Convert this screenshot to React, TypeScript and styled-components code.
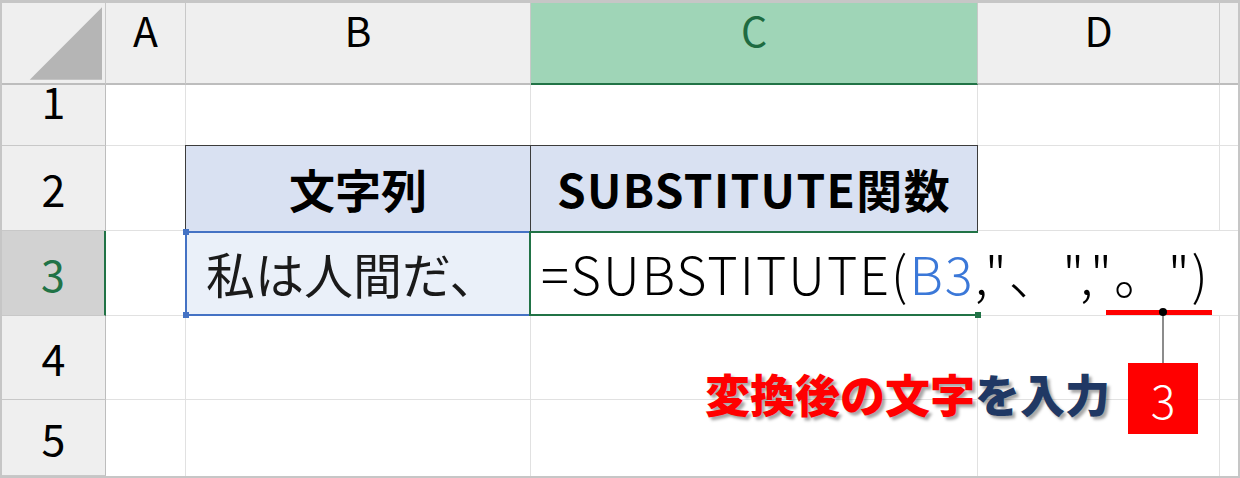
import React from "react";
import styled, { createGlobalStyle, css } from "styled-components";

const GlobalStyle = createGlobalStyle`
  html, body {
    margin: 0;
    padding: 0;
    background: #ffffff;
  }
  body {
    font-family: "Noto Sans CJK JP", "Noto Sans", sans-serif;
  }
`;

const GRID = "#e1e1e1";
const HEAD_LINE = "#c8c8c8";
const GREEN = "#217346";
const BLUE = "#4472c4";

function App() {
  return (
    <>
      <GlobalStyle />
      <Sheet>
        <Corner>
          <svg width="104" height="82" viewBox="0 0 104 82">
            <polygon points="28,78 101,78 101,5" fill="#b5b5b5" />
          </svg>
        </Corner>
        <ColHead>A</ColHead>
        <ColHead>B</ColHead>
        <ColHead $active>C</ColHead>
        <ColHead>D</ColHead>
        <ColHead $last />

        <RowHead $lift={30}>1</RowHead>
        <Cell />
        <Cell />
        <Cell />
        <Cell />
        <Cell $last />

        <RowHead>2</RowHead>
        <Cell />
        <TitleCell>文字列</TitleCell>
        <TitleCell $right>SUBSTITUTE関数</TitleCell>
        <Cell />
        <Cell $last />

        <RowHead $active>3</RowHead>
        <Cell />
        <SourceCell>私は人間だ、</SourceCell>
        <FormulaCell>
          =SUBSTITUTE(<Ref>B3</Ref>,"、","。")
        </FormulaCell>
        <Cell $spill />
        <Cell $last $spill />

        <RowHead>4</RowHead>
        <Cell />
        <Cell />
        <Cell />
        <Cell />
        <Cell $last />

        <RowHead>5</RowHead>
        <Cell $bottom />
        <Cell $bottom />
        <Cell $bottom />
        <Cell $bottom />
        <Cell $last $bottom />

        <Underline />
        <Pin />
        <Leader />
        <StepBadge>3</StepBadge>
        <Caption>
          <Hot>変換後の文字</Hot>を入力
        </Caption>
      </Sheet>
    </>
  );
}

export default App;

const Sheet = styled.div`
  position: relative;
  box-sizing: border-box;
  width: 1240px;
  height: 478px;
  border: 2px solid #c6c6c6;
  border-top-width: 3px;
  display: grid;
  grid-template-columns: 104px 80px 345px 447px 242px 18px;
  grid-template-rows: 82px 61px 85px 85px 84px 76px;
  background: #ffffff;
  overflow: hidden;
`;

const headBase = css`
  box-sizing: border-box;
  display: flex;
  align-items: center;
  justify-content: center;
  background: #efefef;
  font-size: 41px;
  color: #000000;
  line-height: 1;
`;

const Corner = styled.div`
  ${headBase};
  border-right: 1px solid ${HEAD_LINE};
  border-bottom: 2px solid #bdbdbd;
  svg {
    display: block;
  }
`;

const ColHead = styled.div<{ $active?: boolean; $last?: boolean }>`
  ${headBase};
  padding-bottom: 28px;
  border-right: ${(p) => (p.$last ? "none" : `1px solid ${HEAD_LINE}`)};
  border-bottom: 2px solid #bdbdbd;
  ${(p) =>
    p.$active &&
    css`
      background: #9fd5b7;
      color: #1e6b41;
      border-bottom: 2px solid ${GREEN};
    `}
`;

const RowHead = styled.div<{ $active?: boolean; $lift?: number }>`
  ${headBase};
  font-size: 43px;
  padding-bottom: ${(p) => p.$lift ?? 0}px;
  border-right: 1px solid #bdbdbd;
  border-bottom: 1px solid ${HEAD_LINE};
  ${(p) =>
    p.$active &&
    css`
      background: #d2d2d2;
      color: ${GREEN};
      border-right: 2px solid ${GREEN};
    `}
`;

const Cell = styled.div<{ $last?: boolean; $spill?: boolean; $bottom?: boolean }>`
  box-sizing: border-box;
  background: #ffffff;
  border-right: ${(p) => (p.$last || p.$spill ? "none" : `1px solid ${GRID}`)};
  border-bottom: ${(p) => (p.$bottom ? "none" : `1px solid ${GRID}`)};
  border-top: ${(p) => (p.$spill ? `1px solid ${GRID}` : "none")};
  margin-top: ${(p) => (p.$spill ? "-1px" : "0")};
`;

const TitleCell = styled.div<{ $right?: boolean }>`
  box-sizing: border-box;
  display: flex;
  align-items: center;
  justify-content: center;
  background: #d9e1f2;
  border-top: 1px solid #3c3c3c;
  border-left: ${(p) => (p.$right ? "none" : "1px solid #3c3c3c")};
  border-right: 1px solid #3c3c3c;
  margin-top: -1px;
  margin-left: ${(p) => (p.$right ? "0" : "-1px")};
  padding-bottom: 2px;
  font-size: 46px;
  font-weight: 700;
  letter-spacing: ${(p) => (p.$right ? "1.4px" : "0")};
  color: #000000;
  white-space: nowrap;
`;

const handle = css`
  content: "";
  position: absolute;
  width: 6px;
  height: 6px;
  background: ${BLUE};
`;

const SourceCell = styled.div`
  position: relative;
  box-sizing: border-box;
  display: flex;
  align-items: center;
  background: #eaf0f9;
  border: 2px solid ${BLUE};
  margin-left: -1px;
  padding-left: 19px;
  padding-bottom: 2px;
  font-size: 49px;
  font-weight: 400;
  color: #1a1a1a;
  white-space: nowrap;
  &::before {
    ${handle};
    left: -4px;
    top: -4px;
  }
  &::after {
    ${handle};
    left: -4px;
    bottom: -4px;
  }
`;

const FormulaCell = styled.div`
  position: relative;
  z-index: 2;
  box-sizing: border-box;
  display: flex;
  align-items: center;
  border-top: 2px solid ${GREEN};
  border-bottom: 2px solid ${GREEN};
  border-left: 2px solid ${GREEN};
  margin-left: -2px;
  padding-left: 10px;
  padding-bottom: 2px;
  font-size: 52px;
  font-weight: 300;
  letter-spacing: 2px;
  color: #000000;
  white-space: nowrap;
  overflow: visible;
  &::after {
    content: "";
    position: absolute;
    right: -3px;
    bottom: -4px;
    width: 6px;
    height: 6px;
    background: ${GREEN};
  }
`;

const Ref = styled.span`
  color: #3b78d8;
`;

const Underline = styled.div`
  position: absolute;
  left: 1104px;
  top: 307px;
  width: 106px;
  height: 5px;
  background: #ff0000;
  z-index: 3;
`;

const Pin = styled.div`
  position: absolute;
  left: 1157px;
  top: 305px;
  width: 8px;
  height: 8px;
  border-radius: 50%;
  background: #000000;
  z-index: 4;
`;

const Leader = styled.div`
  position: absolute;
  left: 1160px;
  top: 310px;
  width: 2px;
  height: 50px;
  background: #8c8c8c;
  z-index: 3;
`;

const StepBadge = styled.div`
  position: absolute;
  left: 1126px;
  top: 360px;
  width: 70px;
  height: 71px;
  display: flex;
  align-items: center;
  justify-content: center;
  background: #ff0000;
  color: #ffffff;
  font-size: 46px;
  font-weight: 300;
  line-height: 1;
  z-index: 3;
`;

const Caption = styled.div`
  position: absolute;
  left: 703px;
  top: 366px;
  font-size: 45px;
  font-weight: 900;
  line-height: 1.1;
  color: #203864;
  white-space: nowrap;
  text-shadow: 3px 3px 3px rgba(0, 0, 0, 0.35);
  z-index: 3;
`;

const Hot = styled.span`
  color: #ff0000;
`;
